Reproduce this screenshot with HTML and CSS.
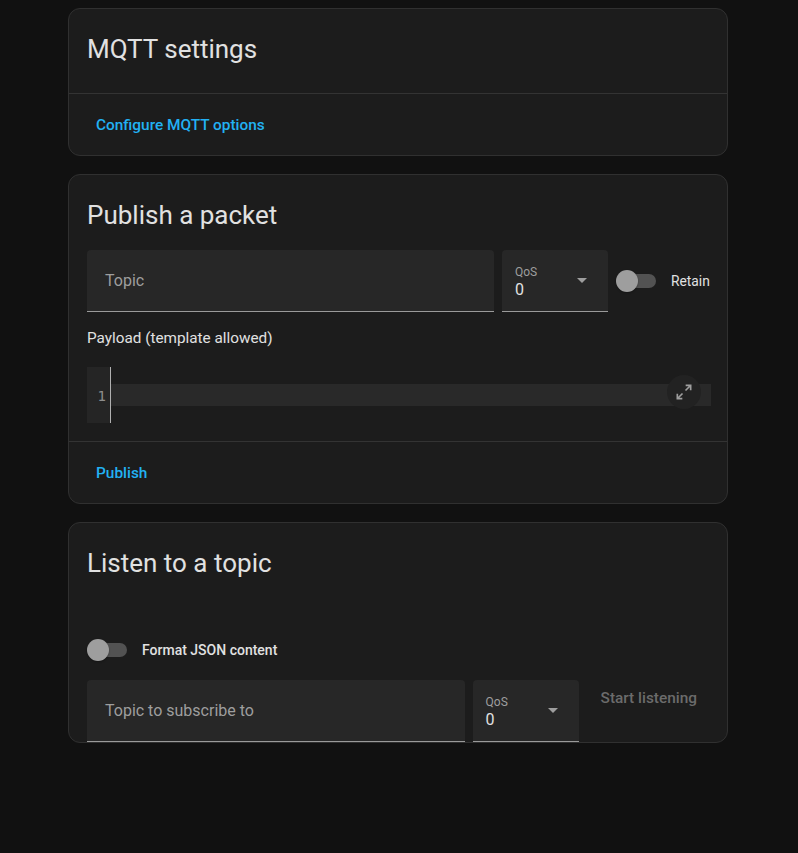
FILE: index.html
```html
<!DOCTYPE html>
<html lang="en">
<head>
<meta charset="utf-8">
<title>MQTT</title>
<link rel="stylesheet" href="styles.css">
</head>
<body>
<main class="page">
  <section class="card">
    <h1 class="card-header">MQTT settings</h1>
    <div class="spacer"></div>
    <div class="card-actions">
      <button class="btn">Configure MQTT options</button>
    </div>
  </section>

  <section class="card">
    <h1 class="card-header">Publish a packet</h1>
    <div class="card-content publish">
      <div class="row">
        <div class="field grow"><span class="placeholder">Topic</span></div>
        <div class="field select">
          <div class="select-text"><span class="small-label">QoS</span><span class="value">0</span></div>
          <span class="arrow"></span>
        </div>
        <div class="switch-wrap retain">
          <span class="switch"><span class="track"></span><span class="thumb"></span></span>
          <span class="switch-label">Retain</span>
        </div>
      </div>
      <div class="payload-label">Payload (template allowed)</div>
      <div class="editor">
        <div class="gutter"><span class="lineno">1</span></div>
        <div class="code">
          <div class="active-line"></div>
          <button class="expand" aria-label="Expand">
            <svg viewBox="0 0 24 24" width="20" height="20"><path fill="currentColor" d="M10,21V19H6.41L10.91,14.5L9.5,13.09L5,17.59V14H3V21H10M14.5,10.91L19,6.41V10H21V3H14V5H17.59L13.09,9.5L14.5,10.91Z"/></svg>
          </button>
        </div>
      </div>
    </div>
    <div class="card-actions">
      <button class="btn">Publish</button>
    </div>
  </section>

  <section class="card">
    <h1 class="card-header">Listen to a topic</h1>
    <div class="card-content listen">
      <div class="switch-wrap json">
        <span class="switch"><span class="track"></span><span class="thumb"></span></span>
        <span class="switch-label">Format JSON content</span>
      </div>
      <div class="row">
        <div class="field grow"><span class="placeholder">Topic to subscribe to</span></div>
        <div class="field select">
          <div class="select-text"><span class="small-label">QoS</span><span class="value">0</span></div>
          <span class="arrow"></span>
        </div>
        <button class="btn disabled">Start listening</button>
      </div>
    </div>
  </section>
</main>
</body>
</html>
```

FILE: styles.css
```css
* { box-sizing: border-box; }

html, body {
  margin: 0;
  padding: 0;
  background: #111111;
  font-family: Roboto, "Noto Sans", sans-serif;
  color: #e1e1e1;
}

.page {
  width: 660px;
  margin-left: 68px;
  padding-top: 8px;
  display: flex;
  flex-direction: column;
  gap: 18px;
}

.card {
  background: #1c1c1c;
  border: 1px solid #303030;
  border-radius: 12px;
  overflow: hidden;
}

.card-header {
  margin: 0;
  padding: 24px 16px 16px 18px;
  font-size: 26px;
  line-height: 32px;
  font-weight: 400;
  color: #e1e1e1;
}

.spacer { height: 12px; }

.card-actions {
  border-top: 1px solid #333333;
  padding: 13px 16px 12px 16px;
  display: flex;
}

.btn {
  font-family: Roboto, sans-serif;
  font-size: 15.4px;
  font-weight: 500;
  height: 36px;
  padding: 0 11px;
  border: 0;
  background: transparent;
  color: #22b1f3;
  border-radius: 4px;
  cursor: pointer;
}

.btn.disabled {
  color: #6b6b6b;
  padding: 0 14px;
  align-self: flex-start;
  cursor: default;
  white-space: nowrap;
}

.card-content {
  padding: 0 16px 0 18px;
}

.card-content.publish {
  padding-top: 3px;
  padding-bottom: 18px;
}

.card-content.listen {
  padding-top: 34px;
}

.row {
  display: flex;
  align-items: center;
  gap: 8px;
}

.listen .row { align-items: flex-start; margin-top: 11px; }

.field {
  height: 62px;
  background: #272727;
  border-radius: 4px 4px 0 0;
  border-bottom: 1px solid #9a9a9a;
  display: flex;
  align-items: center;
}

.field.grow {
  flex: 1;
  padding-left: 18px;
}

.placeholder {
  font-size: 16px;
  color: #9e9e9e;
}

.field.select {
  width: 106px;
  flex: none;
  padding: 0 21px 0 13px;
  justify-content: space-between;
}

.select-text {
  display: flex;
  flex-direction: column;
  padding-top: 5px;
}

.small-label {
  font-size: 12px;
  line-height: 14px;
  color: #9e9e9e;
}

.value {
  font-size: 16px;
  line-height: 22px;
  color: #e1e1e1;
}

.arrow {
  width: 0;
  height: 0;
  border-left: 5px solid transparent;
  border-right: 5px solid transparent;
  border-top: 5px solid #9e9e9e;
  margin-top: -1px;
}

.switch-wrap {
  display: flex;
  align-items: center;
}

.switch {
  position: relative;
  width: 40px;
  height: 22px;
  flex: none;
}

.track {
  position: absolute;
  left: 3px;
  top: 4px;
  width: 37px;
  height: 14px;
  border-radius: 7px;
  background: #525252;
}

.thumb {
  position: absolute;
  left: 0;
  top: 0;
  width: 22px;
  height: 22px;
  border-radius: 50%;
  background: #9e9e9e;
  box-shadow: 0 1px 2px rgba(0,0,0,0.3);
}

.switch-label {
  font-size: 14px;
  color: #e1e1e1;
}

.retain .switch-label {
  margin-left: 15px;
  width: 40px;
  flex: none;
  white-space: nowrap;
  font-size: 13.8px;
}

.json {
  height: 40px;
  padding-top: 1px;
}

.json .switch-label {
  margin-left: 15px;
  font-weight: 500;
  font-size: 14px;
}

.payload-label {
  margin-top: 16px;
  font-size: 15.3px;
  line-height: 20px;
  color: #e1e1e1;
}

.editor {
  margin-top: 19px;
  height: 56px;
  display: flex;
}

.gutter {
  width: 24px;
  background: #252525;
  border-right: 1px solid #b0b0b0;
  display: flex;
  align-items: center;
  justify-content: flex-end;
  padding-right: 4px;
  padding-top: 1px;
}

.lineno {
  font-family: "DejaVu Sans Mono", monospace;
  font-size: 14px;
  color: #8e8e8e;
}

.code {
  flex: 1;
  position: relative;
  display: flex;
  align-items: center;
}

.active-line {
  width: 100%;
  height: 22px;
  background: #292929;
}

.expand {
  position: absolute;
  right: 10px;
  top: 8px;
  width: 34px;
  height: 34px;
  border-radius: 50%;
  border: 0;
  padding: 0;
  background: #222222;
  color: #9e9e9e;
  display: flex;
  align-items: center;
  justify-content: center;
}
```
